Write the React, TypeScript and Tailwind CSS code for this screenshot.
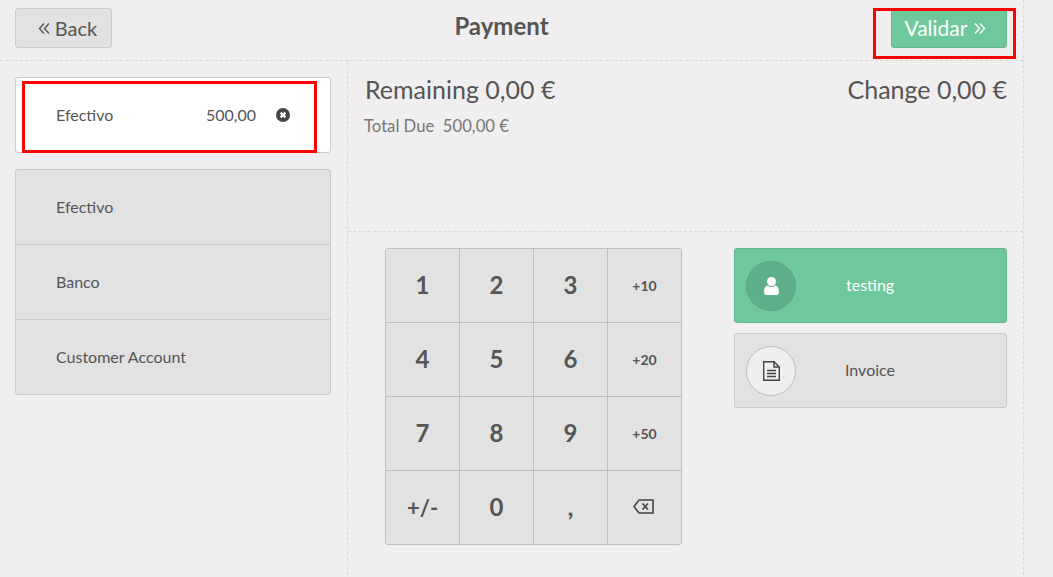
const KEYS = ['1', '2', '3', '+10', '4', '5', '6', '+20', '7', '8', '9', '+50', '+/-', '0', ',', 'del']
const METHODS = ['Efectivo', 'Banco', 'Customer Account']

function Chevrons({ flip }: { flip?: boolean }) {
  return (
    <svg
      width="12"
      height="13"
      viewBox="0 0 12 13"
      fill="none"
      stroke="currentColor"
      strokeWidth="1.4"
      className={flip ? 'rotate-180' : ''}
    >
      <path d="M6 1.5 1.5 6.5 6 11.5M11 1.5 6.5 6.5 11 11.5" />
    </svg>
  )
}

function RemoveIcon() {
  return (
    <svg width="14" height="14" viewBox="0 0 14 14" className="ml-[20px]">
      <circle cx="7" cy="7" r="7" fill="#444444" />
      <path d="M4.6 4.6 9.4 9.4M9.4 4.6 4.6 9.4" stroke="#ffffff" strokeWidth="2.2" />
    </svg>
  )
}

function BackspaceIcon() {
  return (
    <svg width="21" height="15" viewBox="0 0 21 15" fill="none" stroke="#444444" strokeWidth="1.6" className="mb-[1px] mr-[3px]">
      <path d="M6 1H20V14H6L1 7.5Z" />
      <path d="M9.5 4.5 15 10.5M15 4.5 9.5 10.5" />
    </svg>
  )
}

function UserIcon() {
  return (
    <svg width="15" height="18" viewBox="0 0 15 18" fill="#ffffff">
      <circle cx="7.5" cy="4.5" r="4.5" />
      <path d="M0 15C0 10.5 2 8.5 4 8.5 5 9.5 6 10 7.5 10S10 9.5 11 8.5C13 8.5 15 10.5 15 15 15 17 14 18 12.5 18H2.5C1 18 0 17 0 15Z" />
    </svg>
  )
}

function FileIcon() {
  return (
    <svg width="17" height="20" viewBox="0 0 17 20" fill="none" stroke="#444444" strokeWidth="1.4">
      <path d="M.7.7H11L16.3 6V19.3H.7Z" />
      <path d="M11 .7V6H16.3" />
      <path d="M4 9.5H13M4 12.5H13M4 15.5H13" />
    </svg>
  )
}

function Key({ label, index }: { label: string; index: number }) {
  const small = label.startsWith('+') && label !== '+/-'
  const lastCol = index % 4 === 3
  const lastRow = index >= 12
  return (
    <button
      type="button"
      className={`flex items-center justify-center border-[#bfbfbf] bg-[#e2e2e2] pb-[1px] font-bold text-[#555555] ${
        small ? 'text-[14px]' : label === '+/-' ? 'text-[22px]' : 'text-[24px]'
      } ${lastCol ? '' : 'border-r'} ${lastRow ? 'h-[73px]' : 'h-[74px] border-b'}`}
    >
      {label === 'del' ? <BackspaceIcon /> : label}
    </button>
  )
}

export default function App() {
  return (
    <div className="relative h-[577px] w-[1053px] overflow-hidden bg-[#f0eeee] font-['Lato','Open_Sans',sans-serif] text-[#555555]">
      <div className="h-[575px] w-[1024px] border-r border-dashed border-[#d9d9d9]">
        <header className="flex h-[61px] items-start justify-between border-b border-dashed border-[#d9d9d9] pl-[15px] pr-[16px] pt-2">
          <button
            type="button"
            className="flex h-10 w-[97px] items-center justify-center gap-[5px] rounded-[3px] border border-[#cacaca] bg-[#e2e2e2] pl-[8px] text-[20px] text-[#555555]"
          >
            <Chevrons />
            Back
          </button>
          <h1 className="mt-[1px] text-[24px] font-bold leading-[34px]">Payment</h1>
          <button
            type="button"
            className="flex h-10 w-[116px] items-center justify-center gap-[7px] rounded-[3px] border border-[#64b48f] bg-[#6ec89b] pr-[7px] text-[21px] text-white"
          >
            Validar
            <Chevrons flip />
          </button>
        </header>

        <div className="flex h-[514px]">
          <aside className="w-[348px] border-r border-dashed border-[#d9d9d9] pl-[15px] pr-4 pt-4">
            <div className="flex h-[76px] items-center rounded-[3px] border border-[#cacaca] bg-white pl-10 pr-[40px] text-[16px]">
              <span className="flex-1">Efectivo</span>
              <span>500,00</span>
              <RemoveIcon />
            </div>
            <div className="mt-4 overflow-hidden rounded-[3px] border border-[#cacaca] bg-[#e2e2e2] text-[16px]">
              {METHODS.map((m, i) => (
                <div
                  key={m}
                  className={`flex items-center pl-10 ${i < 2 ? 'h-[75px] border-b border-[#cacaca]' : 'h-[74px]'}`}
                >
                  {m}
                </div>
              ))}
            </div>
          </aside>

          <main className="flex-1">
            <section className="h-[171px] border-b border-dashed border-[#d9d9d9] px-4 pt-[11px]">
              <div className="flex justify-between text-[25px] leading-[34px]">
                <span className="ml-[1px]">Remaining 0,00 €</span>
                <span>Change 0,00 €</span>
              </div>
              <div className="mt-[9px] text-[16.7px] leading-[22px] text-[#777777]">
                Total Due&nbsp; 500,00 €
              </div>
            </section>

            <section className="flex items-start pl-[37px] pt-[16px]">
              <div className="grid w-[297px] grid-cols-[74px_74px_74px_73px] overflow-hidden rounded-[3px] border border-[#bfbfbf]">
                {KEYS.map((k, i) => (
                  <Key key={k} label={k} index={i} />
                ))}
              </div>
              <div className="ml-[52px] flex w-[273px] flex-col gap-[10px]">
                <button
                  type="button"
                  className="flex h-[75px] items-center rounded-[3px] border border-[#64b48f] bg-[#6ec89b] pl-[11px] text-[16px] text-white"
                >
                  <span className="flex h-[50px] w-[50px] items-center justify-center rounded-full border border-[#5aa680] bg-[#5fb08a]">
                    <UserIcon />
                  </span>
                  <span className="mb-[2px] ml-[50px]">testing</span>
                </button>
                <button
                  type="button"
                  className="flex h-[75px] items-center rounded-[3px] border border-[#cacaca] bg-[#e2e2e2] pl-[11px] text-[16px] text-[#555555]"
                >
                  <span className="flex h-[50px] w-[50px] items-center justify-center rounded-full border border-[#bfbfbf] bg-[#f0eeee]">
                    <FileIcon />
                  </span>
                  <span className="mb-[2px] ml-[49px]">Invoice</span>
                </button>
              </div>
            </section>
          </main>
        </div>
      </div>

      {/* red annotation boxes drawn over the screenshot */}
      <div className="absolute left-[22px] top-[81px] h-[72px] w-[295px] border-[3px] border-[#ff0000]" />
      <div className="absolute left-[873px] top-[8px] h-[51px] w-[143px] border-[3px] border-[#ff0000]" />
    </div>
  )
}
